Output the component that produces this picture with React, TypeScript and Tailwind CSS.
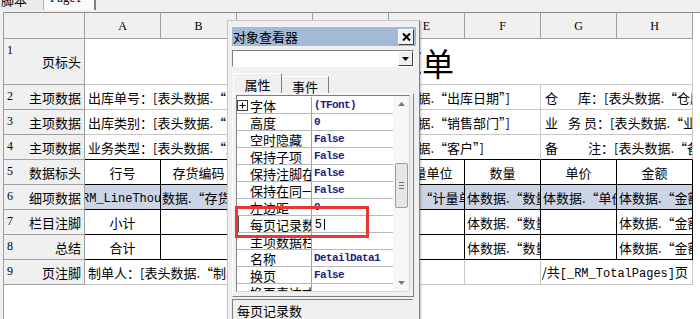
import React from "react";

interface Cell {
    span: 1 | 2 | 3 | 5 | 8;
    content?: React.ReactNode;
    cls?: string;
}

interface BandRow {
    no: number;
    label: string;
    tall?: boolean;
    table?: boolean;
    darkBottom?: boolean;
    detail?: boolean;
    cells: Cell[];
}

interface Prop {
    name: string;
    value: string;
    expand?: boolean;
    editing?: boolean;
}

const spanWidth: Record<number, string> = {
    1: "w-[76px]",
    2: "w-[152px]",
    3: "w-[228px]",
    5: "w-[380px]",
    8: "w-[608px]",
};

const mono = "font-['Liberation_Mono',monospace]";

const rows: BandRow[] = [
    {
        no: 1,
        label: "页标头",
        tall: true,
        cells: [
            {
                span: 8,
                cls: "",
                content: <span className="pl-[273px] text-[32px]">出库单</span>,
            },
        ],
    },
    {
        no: 2,
        label: "主项数据",
        cells: [
            { span: 3, content: "出库单号：[表头数据.“出库单号”]" },
            { span: 3, cls: "pl-0", content: <span className="-ml-[4px]">出库日期：[表头数据.“出库日期”]</span> },
            {
                span: 2,
                cls: "pl-[4px]",
                content: (
                    <>
                        <span className="inline-block w-[33px]">仓</span>库：[表头数据.“仓库”]
                    </>
                ),
            },
        ],
    },
    {
        no: 3,
        label: "主项数据",
        cells: [
            { span: 3, content: "出库类别：[表头数据.“出库类别”]" },
            { span: 3, cls: "pl-0", content: <span className="-ml-[4px]">销售部门：[表头数据.“销售部门”]</span> },
            {
                span: 2,
                cls: "pl-[4px]",
                content: (
                    <>
                        <span className="inline-block w-[23px]">业</span>
                        <span className="inline-block w-[16px]">务</span>员：[表头数据.“业务员”]
                    </>
                ),
            },
        ],
    },
    {
        no: 4,
        label: "主项数据",
        darkBottom: true,
        cells: [
            { span: 3, content: "业务类型：[表头数据.“业务类型”]" },
            { span: 3, cls: "pl-0", content: <span className="-ml-[4px]">客户名称：[表头数据.“客户”]</span> },
            {
                span: 2,
                cls: "pl-[4px]",
                content: (
                    <>
                        <span className="inline-block w-[43px]">备</span>注：[表头数据.“备注”]
                    </>
                ),
            },
        ],
    },
    {
        no: 5,
        label: "数据标头",
        table: true,
        cells: [
            { span: 1, cls: "justify-center", content: "行号" },
            { span: 1, cls: "justify-center", content: "存货编码" },
            { span: 1, cls: "justify-center", content: "存货名称" },
            { span: 1, cls: "justify-center", content: "规格型号" },
            { span: 1, cls: "justify-center", content: "计量单位" },
            { span: 1, cls: "justify-center", content: "数量" },
            { span: 1, cls: "justify-center", content: "单价" },
            { span: 1, cls: "justify-center", content: "金额" },
        ],
    },
    {
        no: 6,
        label: "细项数据",
        table: true,
        detail: true,
        cells: [
            {
                span: 1,
                cls: "",
                content: <span className={`-ml-[3px] text-[12px] ${mono}`}>RM_LineThousand]</span>,
            },
            { span: 1, cls: "pl-[1px]", content: "数据.“存货编码”]" },
            { span: 1, cls: "pl-[1px]", content: "数据.“存货名称”]" },
            { span: 1, cls: "pl-[1px]", content: "数据.“规格型号”]" },
            { span: 1, cls: "pl-[1px]", content: "数据.“计量单位”]" },
            { span: 1, cls: "pl-[2px]", content: "体数据.“数量”]" },
            { span: 1, cls: "pl-[2px]", content: "体数据.“单价”]" },
            { span: 1, cls: "pl-[2px]", content: "体数据.“金额”]" },
        ],
    },
    {
        no: 7,
        label: "栏目注脚",
        table: true,
        cells: [
            { span: 1, cls: "justify-center", content: "小计" },
            { span: 1 },
            { span: 1 },
            { span: 1 },
            { span: 1 },
            { span: 1, cls: "pl-[2px]", content: "体数据.“数量”]" },
            { span: 1 },
            { span: 1, cls: "pl-[2px]", content: "体数据.“金额”]" },
        ],
    },
    {
        no: 8,
        label: "总结",
        table: true,
        cells: [
            { span: 1, cls: "justify-center", content: "合计" },
            { span: 1 },
            { span: 1 },
            { span: 1 },
            { span: 1 },
            { span: 1, cls: "pl-[2px]", content: "体数据.“数量”]" },
            { span: 1 },
            { span: 1, cls: "pl-[2px]", content: "体数据.“金额”]" },
        ],
    },
    {
        no: 9,
        label: "页注脚",
        cells: [
            { span: 5, content: "制单人：[表头数据.“制单人”]" },
            { span: 1 },
            {
                span: 2,
                cls: "justify-end pr-[4px]",
                content: (
                    <>
                        第<span className={`text-[12px] ${mono}`}>[_RM_Page]</span>页/共
                        <span className={`text-[12px] ${mono}`}>[_RM_TotalPages]</span>页
                    </>
                ),
            },
        ],
    },
];

const props: Prop[] = [
    { name: "字体", value: "(TFont)", expand: true },
    { name: "高度", value: "0" },
    { name: "空时隐藏", value: "False" },
    { name: "保持子项", value: "False" },
    { name: "保持注脚在", value: "False" },
    { name: "保持在同一", value: "False" },
    { name: "左边距", value: "0" },
    { name: "每页记录数", value: "5", editing: true },
    { name: "主项数据栏", value: "" },
    { name: "名称", value: "DetailData1" },
    { name: "换页", value: "False" },
    { name: "换页表达式", value: "" },
];

const raised = "border border-t-white border-l-white border-r-[#404040] border-b-[#404040]";

/* ================= OBJECT INSPECTOR ================= */
const Inspector = () => (
    <div className="absolute left-[227px] top-[20px] h-[310px] w-[193px] border border-t-[#c8c8c8] border-l-[#c8c8c8] border-r-[#808080] border-b-[#808080] bg-[#f0f0f0] pl-[4px] pr-[3px] pt-[6px] shadow-[1px_1px_2px_rgba(0,0,0,0.25)]">
        {/* ===== TITLE ===== */}
        <div className="flex h-[19px] items-center justify-between bg-[#a3b9d6]">
            <span className="pl-[1px] text-[13px]">对象查看器</span>
            <div className={`mr-[2px] flex h-[16px] w-[16px] items-center justify-center bg-[#f0f0f0] ${raised}`}>
                <svg width="9" height="8" viewBox="0 0 9 8">
                    <path d="M1 0.5L8 7.5M8 0.5L1 7.5" stroke="#000" strokeWidth="2" />
                </svg>
            </div>
        </div>

        {/* ===== COMBO ===== */}
        <div className="mt-[4px] flex h-[17px] w-[182px] justify-end border border-t-[#808080] border-l-[#808080] border-r-white border-b-white bg-white">
            <div className={`flex h-[15px] w-[15px] items-center justify-center bg-[#f0f0f0] ${raised}`}>
                <svg width="7" height="4" viewBox="0 0 7 4">
                    <path d="M0 0h7L3.5 4z" fill="#000" />
                </svg>
            </div>
        </div>

        {/* ===== TABS ===== */}
        <div className="mt-[6px] flex h-[20px] items-end pl-[1px] text-[13px]">
            <div className="flex h-[20px] w-[49px] justify-center border-t border-l border-r border-t-white border-l-white border-r-[#808080] pt-[4px]">
                属性
            </div>
            <div className="flex h-[17px] w-[47px] justify-center border-t border-r border-t-white border-r-[#808080] pt-[3px]">
                事件
            </div>
        </div>

        {/* ===== PROPERTY PANEL ===== */}
        <div className="h-[204px] w-[182px] border border-t-white border-l-white border-r-[#808080] border-b-[#808080] px-[3px] pt-[1px]">
            <div className="flex h-[197px] w-[174px] border border-t-[#808080] border-l-[#808080] border-r-[#d8d8d8] border-b-[#d8d8d8] bg-white">
                <div className="w-[156px] overflow-hidden pt-[1px]">
                    {props.map((p) => (
                        <div key={p.name} className="flex h-[17px] border-b border-b-[#b8b8b8]">
                            <div
                                className={`flex w-[75px] shrink-0 items-center overflow-hidden whitespace-nowrap border-r border-r-[#a0a0a0] text-[13px] ${
                                    p.expand
                                        ? ""
                                        : p.editing
                                          ? "border-l-2 border-l-[#505050] pl-[11px]"
                                          : "pl-[13px]"
                                }`}
                            >
                                {p.expand && (
                                    <svg width="11" height="11" viewBox="0 0 11 11" className="mr-[2px] shrink-0">
                                        <rect x="0.5" y="0.5" width="10" height="10" fill="#fff" stroke="#404040" />
                                        <path d="M2.5 5.5h6M5.5 2.5v6" stroke="#000" />
                                    </svg>
                                )}
                                {p.name}
                            </div>
                            {p.editing ? (
                                <div className="flex flex-1 items-center pl-[3px] font-['Liberation_Sans',sans-serif] text-[12px]">
                                    {p.value}
                                    <span className="ml-[2px] h-[11px] w-[1px] bg-black" />
                                </div>
                            ) : (
                                <div
                                    className={`flex flex-1 items-center pl-[2px] text-[11px] font-bold tracking-[-0.6px] text-[#1c1c84] ${mono}`}
                                >
                                    {p.value}
                                </div>
                            )}
                        </div>
                    ))}
                </div>

                {/* ===== SCROLLBAR ===== */}
                <div className="flex w-[16px] flex-col bg-[#f7f7f7]">
                    <div className="flex h-[16px] items-center justify-center">
                        <svg width="7" height="4" viewBox="0 0 7 4">
                            <path d="M0 4h7L3.5 0z" fill="#7a7a7a" />
                        </svg>
                    </div>
                    <div className="flex-1">
                        <div className="mx-auto mt-[51px] flex h-[45px] w-[13px] flex-col items-center justify-center gap-[2px] rounded-[2px] border border-[#9c9c9c] bg-[#e6e6e6]">
                            <span className="h-[1px] w-[5px] bg-[#707070]" />
                            <span className="h-[1px] w-[5px] bg-[#707070]" />
                            <span className="h-[1px] w-[5px] bg-[#707070]" />
                        </div>
                    </div>
                    <div className="flex h-[16px] items-center justify-center">
                        <svg width="7" height="4" viewBox="0 0 7 4">
                            <path d="M0 0h7L3.5 4z" fill="#7a7a7a" />
                        </svg>
                    </div>
                </div>
            </div>
        </div>

        {/* ===== STATUS ===== */}
        <div className="mt-[2px] h-[22px] w-[181px] border-t border-l border-t-[#808080] border-l-[#808080] pl-[4px] pt-[4px] text-[13px]">
            每页记录数
        </div>

        {/* red highlight drawn over the grid */}
        <div className="absolute left-[7px] top-[185px] h-[32px] w-[134px] border-[3px] border-[#e53935]" />
    </div>
);

const App = () => {
    return (
        <div className="relative h-[319px] w-[700px] overflow-hidden bg-[#f0f0f0] font-['Noto_Sans_CJK_SC',sans-serif] text-[13px] leading-none text-black">
            {/* ================= PAGE TABS ================= */}
            <div className="flex h-[10px] overflow-hidden">
                <div className="w-[44px] border-r border-r-[#b0b0b0] bg-[#ebebeb] pl-[1px]">
                    <div className="-mt-[7px] leading-[14px]">脚本</div>
                </div>
                <div className="w-[52px] border-r-2 border-r-[#808080] bg-[#fafafa] pl-[6px]">
                    <div className="-mt-[9px] font-['Liberation_Serif',serif] leading-[14px]">Page1</div>
                </div>
            </div>

            {/* ================= SHEET ================= */}
            <div className="ml-[3px] mt-[2px] h-[307px] border-t border-l border-t-[#8c8c8c] border-l-[#a0a0a0] bg-white">
                {/* ===== COLUMN HEADER ===== */}
                <div className="flex h-[26px]">
                    <div className="w-[81px] shrink-0 border-r border-b border-r-[#a0a0a0] border-b-[#a0a0a0] bg-[#f0f0f0]" />
                    {["A", "B", "C", "D", "E", "F", "G", "H"].map((c) => (
                        <div
                            key={c}
                            className="flex w-[76px] shrink-0 items-center justify-center border-r border-b border-r-[#a0a0a0] border-b-[#a0a0a0] bg-[#f0f0f0] font-['Liberation_Serif',serif] text-[12px]"
                        >
                            {c}
                        </div>
                    ))}
                </div>

                {/* ===== BANDS ===== */}
                {rows.map((row) => (
                    <div key={row.no} className={`flex ${row.tall ? "h-[46px]" : "h-[25px]"}`}>
                        <div className="flex w-[81px] shrink-0 items-center border-r border-b border-r-[#a0a0a0] border-b-[#a0a0a0] bg-[#f0f0f0]">
                            <span className="self-start pl-[3px] pt-[5px] font-['Liberation_Serif',serif] text-[12px]">
                                {row.no}
                            </span>
                            <span className="ml-auto pr-[3px]">{row.label}</span>
                        </div>
                        {row.cells.map((c, i) => (
                            <div
                                key={i}
                                className={`flex shrink-0 items-center overflow-hidden whitespace-nowrap border-r border-b ${spanWidth[c.span]} ${
                                    row.table ? "border-r-black" : "border-r-[#c8c8c8]"
                                } ${row.table || row.darkBottom ? "border-b-black" : "border-b-[#c8c8c8]"} ${
                                    row.detail ? "bg-[#ccd5e6]" : ""
                                } ${c.cls ?? "pl-[3px]"}`}
                            >
                                <span className="shrink-0">{c.content}</span>
                            </div>
                        ))}
                    </div>
                ))}
            </div>

            <Inspector />
        </div>
    );
};

export default App;
